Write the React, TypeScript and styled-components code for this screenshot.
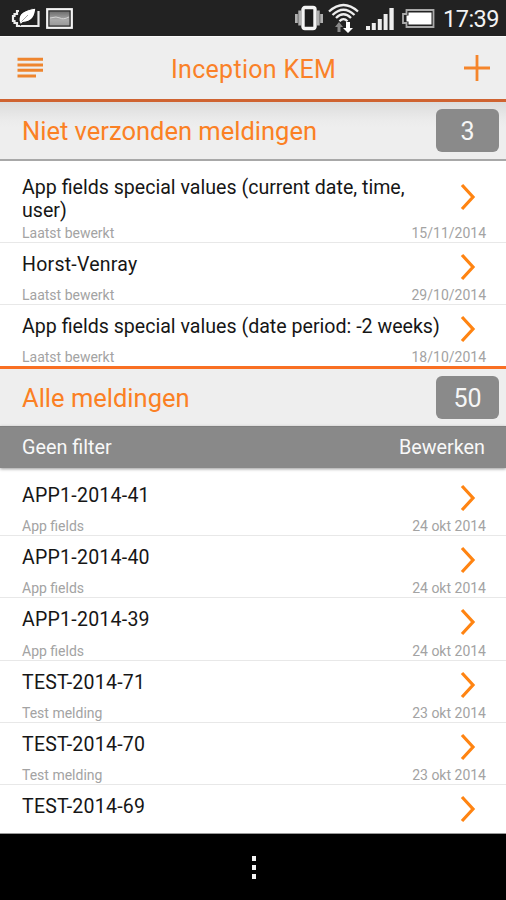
import React from 'react';
import styled, { createGlobalStyle } from 'styled-components';

const GlobalStyle = createGlobalStyle`
  * { box-sizing: border-box; }
  body { margin: 0; background: #000; font-family: Roboto, sans-serif; }
`;

const Screen = styled.div`
  width: 506px;
  height: 900px;
  display: flex;
  flex-direction: column;
  overflow: hidden;
  background: #fff;
`;

const StatusBar = styled.div`
  height: 36px;
  flex: none;
  display: flex;
  align-items: center;
  justify-content: space-between;
  padding: 0 8px 0 11px;
  background: #222;
  color: #f2f2f2;
`;

const StatusGroup = styled.div`
  display: flex;
  align-items: center;
  height: 36px;
`;

const Clock = styled.span`
  width: 55px;
  margin-left: 8px;
  font-size: 23.5px;
  line-height: 36px;
  padding-top: 1px;
  letter-spacing: -0.5px;
  white-space: nowrap;
`;

const TitleBar = styled.header`
  height: 66px;
  flex: none;
  display: grid;
  grid-template-columns: 60px 1fr 60px;
  align-items: center;
  background: #eee;
  border-top: 1px solid #fafafa;
  border-bottom: 3px solid #cf6331;
`;

const TitleText = styled.h1`
  margin: 0;
  padding: 2px 0 0 1px;
  text-align: center;
  font-size: 25px;
  font-weight: 400;
  letter-spacing: 0.3px;
  color: #fa8128;
`;

const IconButton = styled.button<{ $side: 'left' | 'right' }>`
  border: 0;
  background: none;
  display: flex;
  height: 62px;
  align-items: center;
  justify-content: ${(p) => (p.$side === 'left' ? 'flex-start' : 'flex-end')};
  padding: ${(p) => (p.$side === 'left' ? '0 0 0 17px' : '0 16px 0 0')};
`;

const SectionHeader = styled.div<{ $shaded?: boolean }>`
  height: ${(p) => (p.$shaded ? 59 : 60)}px;
  flex: none;
  display: flex;
  align-items: center;
  justify-content: space-between;
  padding: 0 7px 0 22px;
  background: ${(p) => (p.$shaded ? 'linear-gradient(#dcdcdc, #ebebeb 18px, #eee 25px)' : '#eee')};
  border-top: ${(p) => (p.$shaded ? '0' : '3px solid #f96f22')};
  border-bottom: ${(p) => (p.$shaded ? '2px solid #a8a8a8' : '0')};
`;

const SectionTitle = styled.h2`
  margin: 0;
  padding-top: 1px;
  font-size: 25.5px;
  font-weight: 400;
  color: #fb8024;
`;

const Count = styled.span`
  width: 63px;
  height: 43px;
  border-radius: 6px;
  background: #8a8a8a;
  color: #f6f6f6;
  font-size: 25px;
  line-height: 45px;
  text-align: center;
`;

const FilterBar = styled.div`
  height: 42px;
  flex: none;
  display: flex;
  align-items: center;
  justify-content: space-between;
  padding: 0 21px 1px 22px;
  background: #898989;
  border-top: 1px solid #808080;
  color: #f8f8f8;
  font-size: 19.8px;
  box-shadow: 0 1px 3px #999;
`;

const List = styled.div<{ $top: number }>`
  padding-top: ${(p) => p.$top}px;
  flex: none;
`;

const Row = styled.div<{ $height: number; $last?: boolean }>`
  height: ${(p) => p.$height}px;
  display: flex;
  flex-direction: column;
  justify-content: space-between;
  border-bottom: ${(p) => (p.$last ? 0 : 1)}px solid #e8e8e8;
`;

const RowMain = styled.div<{ $tall: boolean }>`
  display: flex;
  justify-content: space-between;
  align-items: center;
  padding: ${(p) => (p.$tall ? 15 : 10)}px 30px 0 22px;
`;

const RowTitle = styled.div<{ $long: boolean }>`
  width: 425px;
  font-size: ${(p) => (p.$long ? 19.6 : 19.5)}px;
  line-height: 23px;
  letter-spacing: ${(p) => (p.$long ? 'normal' : '0.25px')};
  color: #161616;
`;

const ChevronBox = styled.div<{ $tall: boolean }>`
  height: 23px;
  display: flex;
  align-items: center;
  padding-top: 5px;
  margin-bottom: ${(p) => (p.$tall ? 10 : 0)}px;
`;

const RowMeta = styled.div<{ $tall: boolean }>`
  display: flex;
  justify-content: space-between;
  padding: 0 20px 0 22px;
  margin-top: ${(p) => (p.$tall ? -4 : 0)}px;
  margin-bottom: 1px;
  font-size: 14px;
  line-height: 16px;
  color: #a3a3a3;
`;

const Viewport = styled.main`
  height: 798px;
  flex: none;
  overflow: hidden;
  border-bottom: 1px solid #999;
`;

const BottomBar = styled.nav`
  flex: 1;
  display: flex;
  flex-direction: column;
  align-items: center;
  justify-content: center;
  gap: 4px;
  padding-left: 1px;
  background: #000;
`;

const MenuDot = styled.i`
  width: 4px;
  height: 5px;
  background: #f5f5f5;
`;

const PowerSaverIcon = () => (
  <svg width="30" height="22" viewBox="0 0 30 22">
    <path d="M8 4H6v3H3.500v2H2v5h1.500v2H6v3h21.500V4" fill="none" stroke="#ececec" strokeWidth="2.2" />
    <path d="M8 14C7 6 13 3 25 1c-1 9-4 14-13 14.500L9.500 18z" fill="#fff" stroke="#1a1a1a" strokeWidth="1.2" />
    <path d="M10.500 14.500 17 8" stroke="#999" strokeWidth=".9" />
  </svg>
);

const PictureIcon = () => (
  <svg width="27" height="21" viewBox="0 0 27 21">
    <defs>
      <linearGradient id="photo" x1="0" y1="0" x2="0" y2="1">
        <stop offset="0" stopColor="#6e6e6e" />
        <stop offset="0.6" stopColor="#aaa" />
        <stop offset="1" stopColor="#999" />
      </linearGradient>
    </defs>
    <rect x="1.200" y="1.200" width="24.600" height="18.600" fill="#222" stroke="#f4f4f4" strokeWidth="2.2" />
    <rect x="3.500" y="3.500" width="20" height="14" fill="url(#photo)" />
    <path d="M4 10q7-2 10 0t9-1" stroke="#d4d4d4" fill="none" />
  </svg>
);

const VibrateIcon = () => (
  <svg width="28" height="26" viewBox="0 0 28 26">
    <path d="M1.400 9v9M4.700 5.500v15M26.600 9v9M23.300 5.500v15" stroke="#b0b0b0" strokeWidth="2.8" />
    <rect x="8" y="2.500" width="12" height="21" rx="2" fill="#1c1c1c" stroke="#f4f4f4" strokeWidth="3.4" />
  </svg>
);

const WifiIcon = () => (
  <svg width="31" height="30" viewBox="0 0 31 30">
    <g fill="none" stroke="#eee" strokeWidth="2.3">
      <path d="M1 8.500Q15.500-4.500 30 8.500" />
      <path d="M4.500 12Q15.500 1.500 26.500 12" />
      <path d="M8 15Q15.500 7.500 23 15" />
      <path d="M11.500 18.200Q15.500 14 19.500 18.200" />
    </g>
    <path d="M11 19l-4 5h2.500v5h3v-5H15z" fill="#888" />
    <path d="M20 30l-5-5h3v-6h4v6h3z" fill="#fff" />
  </svg>
);

const SignalIcon = () => (
  <svg width="28" height="23" viewBox="0 0 28 23">
    <path d="M0 19h4v4H0zM5.800 16h4v7h-4zM11.800 12h4v11h-4zM17.600 7h4v16h-4zM23.400 1h4.300v22h-4.300z" fill="#ededed" />
  </svg>
);

const BatteryIcon = () => (
  <svg width="33" height="19" viewBox="0 0 33 19">
    <path d="M4.500 1h27v17h-27v-4H1V5h3.500z" fill="#222" stroke="#aaa" strokeWidth="1.8" />
    <path d="M6.500 3.500h23v12h-23v-3h-2v-6h2z" fill="#fff" />
  </svg>
);

const MenuIcon = () => (
  <svg width="27" height="22" viewBox="0 0 27 22">
    <path d="M.5 2.300h25.500M.5 7.900h25.500M.5 13.300h25.500M.5 19h18.500" stroke="#ee852e" strokeWidth="3" />
  </svg>
);

const PlusIcon = () => (
  <svg width="26" height="26" viewBox="0 0 26 26">
    <path d="M13 0v26M0 13h26" stroke="#f5852b" strokeWidth="2.8" />
  </svg>
);

const ChevronIcon = () => (
  <svg width="16" height="28" viewBox="0 0 16 28">
    <path d="M2 2 13 14 2 26" fill="none" stroke="#ff8412" strokeWidth="3.2" />
  </svg>
);

type Entry = { title: string; meta: string; date: string; height: number; last?: boolean };

const unsent: Entry[] = [
  { title: 'App fields special values (current date, time, user)', meta: 'Laatst bewerkt', date: '15/11/2014', height: 82 },
  { title: 'Horst-Venray', meta: 'Laatst bewerkt', date: '29/10/2014', height: 62 },
  { title: 'App fields special values (date period: -2 weeks)', meta: 'Laatst bewerkt', date: '18/10/2014', height: 61, last: true },
];

const all: Entry[] = [
  { title: 'APP1-2014-41', meta: 'App fields', date: '24 okt 2014', height: 62 },
  { title: 'APP1-2014-40', meta: 'App fields', date: '24 okt 2014', height: 62 },
  { title: 'APP1-2014-39', meta: 'App fields', date: '24 okt 2014', height: 63 },
  { title: 'TEST-2014-71', meta: 'Test melding', date: '23 okt 2014', height: 62 },
  { title: 'TEST-2014-70', meta: 'Test melding', date: '23 okt 2014', height: 62 },
  { title: 'TEST-2014-69', meta: '', date: '', height: 62 },
];

const EntryRow = ({ entry }: { entry: Entry }) => {
  const tall = entry.height > 70;
  return (
    <Row $height={entry.height} $last={entry.last}>
      <RowMain $tall={tall}>
        <RowTitle $long={entry.title.length > 20}>{entry.title}</RowTitle>
        <ChevronBox $tall={tall}><ChevronIcon /></ChevronBox>
      </RowMain>
      <RowMeta $tall={tall}>
        <span>{entry.meta}</span>
        <span>{entry.date}</span>
      </RowMeta>
    </Row>
  );
};

const StatusItem = styled.span<{ $gap: number }>`
  display: flex;
  margin-left: ${(p) => p.$gap}px;
`;

export default function App() {
  return (
    <Screen>
      <GlobalStyle />
      <StatusBar>
        <StatusGroup>
          <PowerSaverIcon />
          <StatusItem $gap={5}><PictureIcon /></StatusItem>
        </StatusGroup>
        <StatusGroup>
          <VibrateIcon />
          <StatusItem $gap={5}><WifiIcon /></StatusItem>
          <StatusItem $gap={7}><SignalIcon /></StatusItem>
          <StatusItem $gap={8}><BatteryIcon /></StatusItem>
          <Clock>17:39</Clock>
        </StatusGroup>
      </StatusBar>
      <Viewport>
        <TitleBar>
          <IconButton $side="left" aria-label="Menu"><MenuIcon /></IconButton>
          <TitleText>Inception KEM</TitleText>
          <IconButton $side="right" aria-label="Nieuw"><PlusIcon /></IconButton>
        </TitleBar>
        <SectionHeader $shaded>
          <SectionTitle>Niet verzonden meldingen</SectionTitle>
          <Count>3</Count>
        </SectionHeader>
        <List $top={0}>
          {unsent.map((e) => <EntryRow key={e.date} entry={e} />)}
        </List>
        <SectionHeader>
          <SectionTitle>Alle meldingen</SectionTitle>
          <Count>50</Count>
        </SectionHeader>
        <FilterBar>
          <span>Geen filter</span>
          <span>Bewerken</span>
        </FilterBar>
        <List $top={6}>
          {all.map((e) => <EntryRow key={e.title} entry={e} />)}
        </List>
      </Viewport>
      <BottomBar>
        <MenuDot /><MenuDot /><MenuDot />
      </BottomBar>
    </Screen>
  );
}
